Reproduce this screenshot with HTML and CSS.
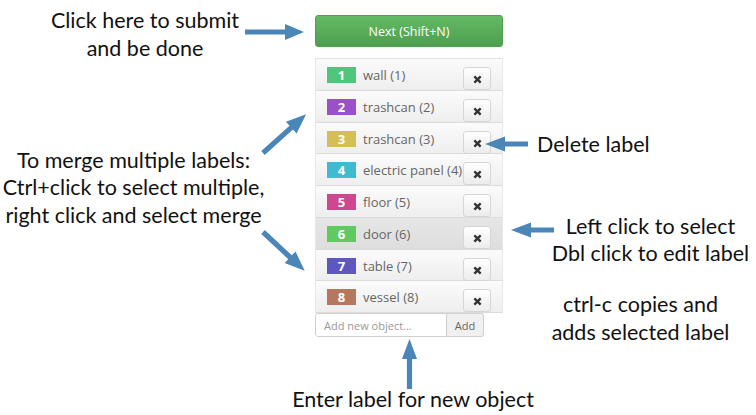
FILE: index.html
```html
<!DOCTYPE html>
<html>
<head>
<meta charset="utf-8">
<link rel="stylesheet" href="styles.css">
</head>
<body>
<div class="stage">
  <div class="panel">
    <button class="next-btn">Next (Shift+N)</button>
    <ul class="labels">
      <li class="row"><span class="badge c1">1</span><span class="name">wall (1)</span><button class="del"><svg viewBox="0 0 10 10" width="9" height="9"><path d="M1.5 1.5 L8.5 8.5 M8.5 1.5 L1.5 8.5" stroke="#333" stroke-width="2.6"/></svg></button></li>
      <li class="row"><span class="badge c2">2</span><span class="name">trashcan (2)</span><button class="del"><svg viewBox="0 0 10 10" width="9" height="9"><path d="M1.5 1.5 L8.5 8.5 M8.5 1.5 L1.5 8.5" stroke="#333" stroke-width="2.6"/></svg></button></li>
      <li class="row"><span class="badge c3">3</span><span class="name">trashcan (3)</span><button class="del"><svg viewBox="0 0 10 10" width="9" height="9"><path d="M1.5 1.5 L8.5 8.5 M8.5 1.5 L1.5 8.5" stroke="#333" stroke-width="2.6"/></svg></button></li>
      <li class="row"><span class="badge c4">4</span><span class="name">electric panel (4)</span><button class="del"><svg viewBox="0 0 10 10" width="9" height="9"><path d="M1.5 1.5 L8.5 8.5 M8.5 1.5 L1.5 8.5" stroke="#333" stroke-width="2.6"/></svg></button></li>
      <li class="row"><span class="badge c5">5</span><span class="name">floor (5)</span><button class="del"><svg viewBox="0 0 10 10" width="9" height="9"><path d="M1.5 1.5 L8.5 8.5 M8.5 1.5 L1.5 8.5" stroke="#333" stroke-width="2.6"/></svg></button></li>
      <li class="row selected"><span class="badge c6">6</span><span class="name">door (6)</span><button class="del"><svg viewBox="0 0 10 10" width="9" height="9"><path d="M1.5 1.5 L8.5 8.5 M8.5 1.5 L1.5 8.5" stroke="#333" stroke-width="2.6"/></svg></button></li>
      <li class="row"><span class="badge c7">7</span><span class="name">table (7)</span><button class="del"><svg viewBox="0 0 10 10" width="9" height="9"><path d="M1.5 1.5 L8.5 8.5 M8.5 1.5 L1.5 8.5" stroke="#333" stroke-width="2.6"/></svg></button></li>
      <li class="row"><span class="badge c8">8</span><span class="name">vessel (8)</span><button class="del"><svg viewBox="0 0 10 10" width="9" height="9"><path d="M1.5 1.5 L8.5 8.5 M8.5 1.5 L1.5 8.5" stroke="#333" stroke-width="2.6"/></svg></button></li>
    </ul>
    <div class="add-group">
      <input class="add-input" type="text" placeholder="Add new object...">
      <button class="add-btn">Add</button>
    </div>
  </div>

  <div class="note note-submit">Click here to submit<br>and be done</div>
  <div class="note note-merge">To merge multiple labels:<br>Ctrl+click to select multiple,<br>right click and select merge</div>
  <div class="note note-delete">Delete label</div>
  <div class="note note-select">Left click to select<br>Dbl click to edit label</div>
  <div class="note note-copy">ctrl-c copies and<br>adds selected label</div>
  <div class="note note-enter">Enter label for new object</div>

  <svg class="arrows" width="756" height="415" viewBox="0 0 756 415">
    <g fill="#4a86b8">
      <polygon points="245,29.4 285,29.4 285,24 304,32 285,40 285,34.6 245,34.6"/>
      <g transform="translate(263,153) rotate(-42)"><polygon points="0,-2.6 38,-2.6 38,-8 58,0 38,8 38,2.6 0,2.6"/></g>
      <g transform="translate(263,232) rotate(43)"><polygon points="0,-2.6 37,-2.6 37,-8 57,0 37,8 37,2.6 0,2.6"/></g>
      <g transform="translate(528,144) rotate(180)"><polygon points="0,-2.4 23,-2.4 23,-7.5 43,0 23,7.5 23,2.4 0,2.4"/></g>
      <g transform="translate(554,230) rotate(180)"><polygon points="0,-2.4 23,-2.4 23,-7.5 43,0 23,7.5 23,2.4 0,2.4"/></g>
      <g transform="translate(409.5,389) rotate(-90)"><polygon points="0,-2.6 30,-2.6 30,-7.5 50,0 30,7.5 30,2.6 0,2.6"/></g>
    </g>
  </svg>
</div>
</body>
</html>
```

FILE: styles.css
```css
* { box-sizing: border-box; }
html, body { margin: 0; padding: 0; background: #fff; }
.stage {
  position: relative;
  width: 756px;
  height: 415px;
  overflow: hidden;
  font-family: "Open Sans", sans-serif;
}
.panel {
  width: 188px;
  margin-left: 315px;
  padding-top: 15px;
}
.next-btn {
  display: block;
  width: 188px;
  height: 32px;
  border: 1px solid #4f9f4f;
  border-radius: 3px;
  background: linear-gradient(#64bb64, #4e9e4e);
  color: #fff;
  font-family: "Open Sans", sans-serif;
  font-size: 12.5px;
  font-weight: 400;
  padding: 0;
}
.labels {
  list-style: none;
  margin: 11px 0 0 0;
  padding: 0;
  border-top: 1px solid #e2e2e2;
  border-left: 1px solid #e8e8e8;
  border-right: 1px solid #e8e8e8;
}
.row {
  display: flex;
  align-items: flex-start;
  height: 31.75px;
  padding: 8px 11px 0 11px;
  background: linear-gradient(#fbfbfb, #eeeeee);
  border-bottom: 1px solid #dcdcdc;
}
.row.selected {
  background: linear-gradient(#e6e6e6, #dedede);
}
.badge {
  flex: none;
  width: 29px;
  height: 16px;
  line-height: 16px;
  text-align: center;
  color: #fff;
  font-size: 13px;
  font-weight: 700;
  margin-right: 7px;
}
.c1 { background: #50c57c; }
.c2 { background: #9a50c8; }
.c3 { background: #d3bf55; }
.c4 { background: #3fbad3; }
.c5 { background: #d04690; }
.c6 { background: #5fca5f; }
.c7 { background: #5d57bf; }
.c8 { background: #b5775e; }
.name {
  font-size: 13px;
  line-height: 16px;
  color: #666;
  white-space: nowrap;
}
.del {
  flex: none;
  margin-left: auto;
  width: 28px;
  height: 23px;
  padding: 0;
  border: 1px solid #d6d6d6;
  border-radius: 3px;
  background: linear-gradient(#ffffff, #ececec);
  display: flex;
  align-items: center;
  justify-content: center;
}
.del svg { display: block; margin-top: 2px; }
.add-group {
  display: flex;
}
.add-input {
  width: 132px;
  height: 24px;
  border: 1px solid #d0d0d0;
  border-radius: 3px 0 0 3px;
  padding: 0 0 0 8px;
  font-family: "Open Sans", sans-serif;
  font-size: 11px;
  color: #555;
  outline: none;
}
.add-input::placeholder { color: #999; }
.add-btn {
  width: 37px;
  height: 24px;
  border: 1px solid #d0d0d0;
  border-left: none;
  border-radius: 0 3px 3px 0;
  background: #f0f0f0;
  color: #666;
  font-family: "Open Sans", sans-serif;
  font-size: 11px;
  padding: 0;
}
.note {
  position: absolute;
  font-family: "Lato", "Open Sans", sans-serif;
  font-size: 21.5px;
  line-height: 27.5px;
  color: #111;
  text-align: center;
  white-space: nowrap;
}
.note-submit { left: 35px; width: 220px; top: 7px; }
.note-merge { left: 0; width: 267px; top: 146.5px; }
.note-delete { left: 537px; width: 120px; top: 131px; text-align: left; }
.note-select { left: 535px; width: 231px; top: 212.5px; }
.note-copy { left: 530px; width: 221px; top: 291px; }
.note-enter { left: 273px; width: 280px; top: 386px; }
.arrows {
  position: absolute;
  left: 0;
  top: 0;
  pointer-events: none;
}
```
